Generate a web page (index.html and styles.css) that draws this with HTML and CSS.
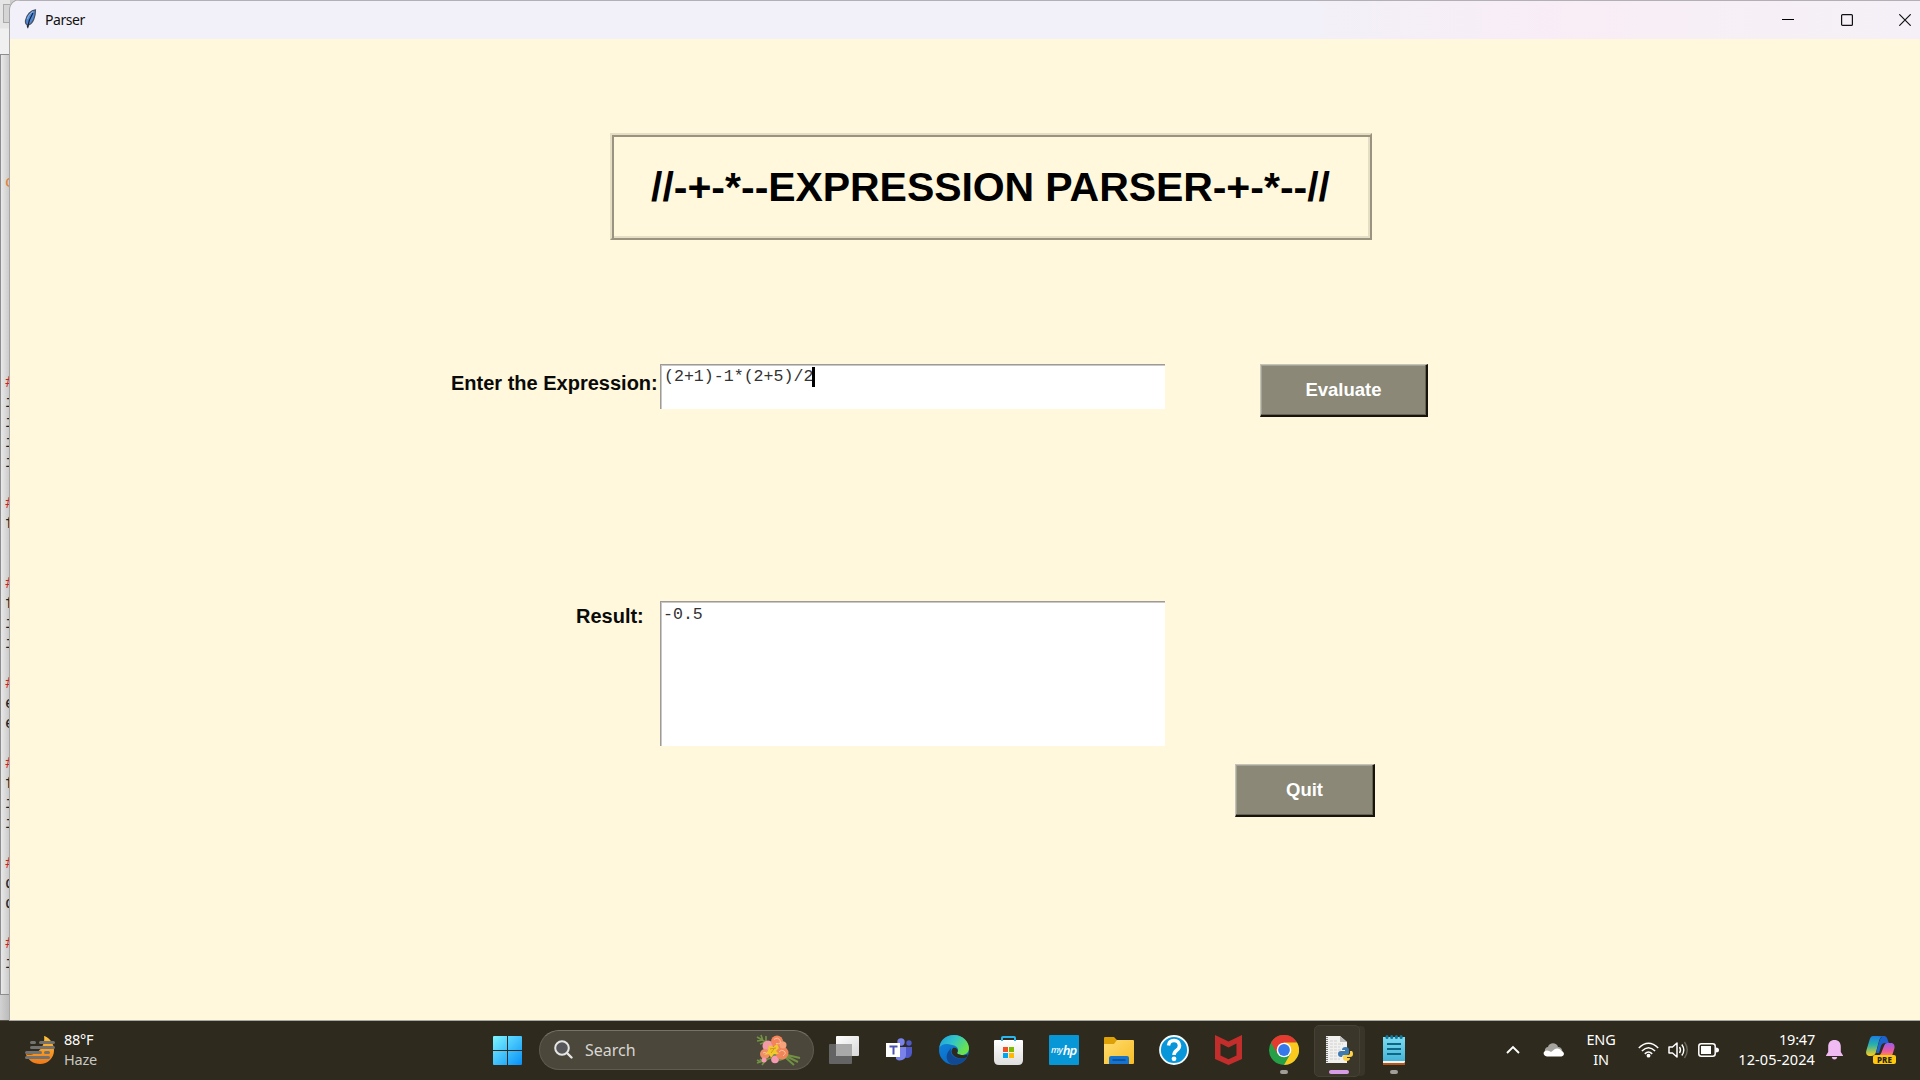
FILE: index.html
```html
<!DOCTYPE html>
<html lang="en">
<head>
<meta charset="utf-8">
<title>Parser</title>
<link rel="stylesheet" href="styles.css">
</head>
<body>
<div class="desktop">
  <div class="editor">
    <div class="editor-top"><span class="editor-tool"></span></div>
    <pre class="code"><span class="builtin">c</span>









<span class="comment">#</span>
i
i
i
i

<span class="comment">#</span>
f


<span class="comment">#</span>
f
i
i

<span class="comment">#</span>
e
e

<span class="comment">#</span>
f
i
i

<span class="comment">#</span>
d
d

<span class="comment">#</span>
i</pre>
    <div class="editor-status"></div>
  </div>
  <main class="window">
    <header class="titlebar">
      <svg class="feather" width="14" height="20" viewBox="0 0 14 20"><path d="M11.5.8C7 1 2.500 6 1.500 11.500c-.3 2 .4 3.500 1.700 4.200l.5 3.500.9-3.300C9 14.500 11.500 8 11.500.8z" fill="#4f8ad8" stroke="#4a5260" stroke-width="1.200"/><path d="M9 4C6.500 8 4.500 11 3.600 18" fill="none" stroke="#152039" stroke-width="1.100"/><path d="M9 2.500C6 4.500 4 7 3.500 10" fill="none" stroke="#8db6e8"/></svg>
      <span class="window-name">Parser</span>
      <div class="controls">
        <svg width="12" height="12" viewBox="0 0 12 12"><path d="M0 5.500h12" stroke="#000"/></svg>
        <svg width="12" height="12" viewBox="0 0 12 12"><rect x=".6" y=".6" width="10.800" height="10.800" rx="1" fill="none" stroke="#111" stroke-width="1.200"/></svg>
        <svg width="12" height="12" viewBox="0 0 12 12"><path d="M.3.3l11.400 11.400M11.700.3L.3 11.700" stroke="#111" stroke-width="1.200"/></svg>
      </div>
    </header>
    <section class="content">
      <h1 class="banner"><span>//-+-*--</span><span class="banner-name">EXPRESSION PARSER</span><span>-+-*--//</span></h1>
      <div class="row row-expression">
        <label class="label label-expression">Enter the Expression:</label>
        <div class="field field-expression"><span class="typed">(2+1)-1*(2+5)/2</span><i class="caret"></i></div>
        <button class="button button-evaluate">Evaluate</button>
      </div>
      <div class="row row-result">
        <label class="label label-result">Result:</label>
        <div class="field field-result">-0.5</div>
      </div>
      <button class="button button-quit">Quit</button>
    </section>
  </main>
</div>
<footer class="taskbar">
  <div class="weather">
    <svg width="30" height="28" viewBox="0 0 30 28"><defs><linearGradient id="sun" x2="0" y2="1"><stop stop-color="#ffc43a"/><stop offset="1" stop-color="#f07817"/></linearGradient></defs><path d="M19 0c4 1 10 6 10 14.500C29 22 23 28 15 28 8 28 3 24 .8 18 11 21 21 11 19 0z" fill="url(#sun)"/><path d="M6.500 6.500h3M15.500 6.500h13M6.500 11.500h22M1.500 16.500h14M20.500 16.500h3M1.500 21.500h22" stroke="#727270" stroke-width="3" stroke-linecap="round"/></svg>
    <div class="weather-text"><span>88°F</span><span class="haze">Haze</span></div>
  </div>
  <svg class="start" width="29" height="29" viewBox="0 0 29 29"><defs><linearGradient id="win" x2="1" y2="1"><stop stop-color="#7df5ff"/><stop offset="1" stop-color="#0790f8"/></linearGradient></defs><path d="M1 0h13v14H0V1a1 1 0 0 1 1-1zM15 0h13a1 1 0 0 1 1 1v13H15zM0 15h14v14H1a1 1 0 0 1-1-1zM15 15h14v13a1 1 0 0 1-1 1H15z" fill="url(#win)"/></svg>
  <div class="search">
    <svg width="19" height="19" viewBox="0 0 19 19"><circle cx="8" cy="8" r="6.800" fill="#57575a" stroke="#e6e6e6" stroke-width="2"/><path d="M13 13l4.500 4.500" stroke="#e6e6e6" stroke-width="2.400" stroke-linecap="round"/></svg>
    <span class="search-text">Search</span>
    <svg class="bouquet" width="46" height="32" viewBox="0 0 46 32">
      <g fill="none" stroke="#719143" stroke-width="1.700"><path d="M16 11L2 3M5 10l6-2M2 7l6-1M8 12l6-2M6 1l2 6M11 2l0 6"/><path d="M16 24L2 29M5 25l3 3M9 24l3 3M7 31l3-4M2 26l4 2"/><path d="M32 21l13 3M31 22l12 6M30 23l9 8" stroke-width="2"/></g>
      <path d="M26 4l5 6-1 6 5 7-10 4-9-1z" fill="#719143"/>
      <circle cx="13" cy="12" r="5.500" fill="#f29aa8"/><circle cx="22" cy="7.500" r="6" fill="#f4845c"/><circle cx="10" cy="20" r="5" fill="#ee8f68"/><circle cx="20" cy="25.500" r="3.800" fill="#f59ab0"/><circle cx="27" cy="19" r="6.500" fill="#f0855a"/><circle cx="28" cy="11" r="3.500" fill="#f8a27c"/><circle cx="9" cy="26" r="2.500" fill="#f59ab0"/>
      <path d="M14 11l4 2 4-3 2 4-3 3 3 3-5 0-3 4-2-4-5 1 4-4z" fill="#f1c92f"/>
      <path d="M19 5.500q4-3 6 1t-4 3M24 18q2-3 5-1t-1 5M8 19q2-2 4 1" fill="none" stroke="#ffc0a0"/><path d="M15 15l6-1M16 19l3-4" stroke="#c99a12"/>
    </svg>
  </div>
  <nav class="apps">
    <div class="app"><svg width="30" height="28" viewBox="0 0 30 28"><defs><linearGradient id="tv" x2="1" y2="1"><stop stop-color="#fff"/><stop offset="1" stop-color="#d8d8d8"/></linearGradient></defs><rect y="8" width="23" height="20" rx="1" fill="#646464"/><rect x="7" y="0" width="23" height="20" rx="1" fill="url(#tv)"/><path d="M7 8h16v12H8a1 1 0 0 1-1-1z" fill="#a9a9a9"/></svg></div>
    <div class="app"><svg class="teams" width="27" height="24" viewBox="0 0 27 24"><circle cx="15" cy="4" r="3.700" fill="#7b83eb"/><circle cx="23" cy="5" r="2.700" fill="#5059c9"/><path d="M18 9h8v6a5 5 0 0 1-8 4z" fill="#5059c9"/><path d="M10 9h10v8a6 6 0 0 1-10 4z" fill="#7b83eb"/><rect y="5" width="14" height="14" fill="#fff"/><path d="M3.500 8.500h8M7.500 8.500v8" stroke="#4c53b4" stroke-width="2"/></svg></div>
    <div class="app"><svg width="30" height="30" viewBox="0 0 30 30"><defs><linearGradient id="ea" x2="1" y2=".5"><stop stop-color="#1b9de2"/><stop offset=".5" stop-color="#32c5c8"/><stop offset="1" stop-color="#6ae34b"/></linearGradient><linearGradient id="eb" x2=".6" y2="1"><stop stop-color="#1489dc"/><stop offset="1" stop-color="#0867c4"/></linearGradient></defs><circle cx="15" cy="15" r="15" fill="url(#eb)"/><path d="M28 22c-3 5-8 8-13 8-7-1-9-8-6-13l3-4c-2 8 6 13 16 9z" fill="#114a93"/><path d="M.4 13C1 5 7 0 15 0c9 0 15 7 15 13 0 5-4 7-7 7-2 0-5-1-5-2 2-2 2-7-5-8C7 8 2 9 .4 13z" fill="url(#ea)"/><path d="M18 18c1 2 7 3 10.500 1.500L28.500 22c-5 2-11 2-14.500-2-2-2-2-5 0-7 4-1 6 3 4 5z" fill="#2e2a1d"/></svg></div>
    <div class="app"><svg width="29" height="30" viewBox="0 0 29 30"><defs><linearGradient id="st" x2="0" y2="1"><stop stop-color="#fff"/><stop offset="1" stop-color="#dedede"/></linearGradient></defs><path d="M0 6q0-1 1-1h27q1 0 1 1v19q0 5-5 5H5q-5 0-5-5z" fill="url(#st)"/><path d="M8 6V2.800Q8 2 9 2h11q1 0 1 .8V6" fill="none" stroke="#2cb6ef" stroke-width="2"/><path fill="#f25022" d="M9 12h5v5H9z"/><path fill="#7fba00" d="M15 12h5v5h-5z"/><path fill="#00a4ef" d="M9 18h5v5H9z"/><path fill="#ffb900" d="M15 18h5v5h-5z"/></svg></div>
    <div class="app"><div class="myhp"><span class="my">my</span><span class="hp">hp</span></div></div>
    <div class="app"><svg class="folder" width="30" height="27" viewBox="0 0 30 27"><defs><linearGradient id="fo" x2="1" y2="1"><stop stop-color="#ffdc70"/><stop offset="1" stop-color="#f8bd25"/></linearGradient></defs><path d="M0 10V1q0-1 1-1h9l3 3h8v7z" fill="#dda006"/><path d="M0 7h10l3-4h16q1 0 1 1v22q0 1-1 1H0z" fill="url(#fo)"/><path d="M5 27v-6q0-2 2-2h16q2 0 2 2v6z" fill="#1673ce"/><path d="M9 23h12" stroke="#0b4a91" stroke-width="1.300" stroke-linecap="round"/></svg></div>
    <div class="app"><svg width="30" height="30" viewBox="0 0 30 30"><circle cx="15" cy="15" r="14" fill="#0796d9" stroke="#f6fbff" stroke-width="1.800"/><path d="M9.500 10.500q.5-5 5.500-5t5.500 5q0 3-3 5-2.500 1.800-2.500 4.500" fill="none" stroke="#fff" stroke-width="3.500"/><circle cx="15" cy="23.800" r="2.400" fill="#fff"/></svg></div>
    <div class="app"><svg width="27" height="30" viewBox="0 0 27 30"><path d="M0 0l13.500 6.500L27 0v24l-13.500 6L0 24zM5.500 8.500v12l8 3.700 8-3.700v-12l-8 4z" fill="#c32e2c" fill-rule="evenodd"/></svg></div>
    <div class="app running"><svg width="30" height="30" viewBox="0 0 30 30"><circle cx="15" cy="15" r="15" fill="#25a046"/><path d="M2 7.500A15 15 0 0 1 28 7.500L15 8.500 8.500 18.700z" fill="#e43b30"/><path d="M28 7.500A15 15 0 0 1 15 30l6.500-11.300L15 7.500z" fill="#fbc91e"/><circle cx="15" cy="15" r="7.300" fill="#fff"/><circle cx="15" cy="15" r="5.900" fill="#3478ea"/></svg></div>
    <div class="app active"><svg class="python" width="28" height="28" viewBox="0 0 28 28"><path d="M1 0h14l7 6v21H1z" fill="#f1f1f0"/><path d="M15 0v6h7z" fill="#bdbdbd"/><path d="M2 1v26" stroke="#555" stroke-width="1.500" stroke-dasharray="1 1"/><path d="M5 5h8M5 8h13M5 11h10M5 14h12M5 17h9M5 20h8M5 23h10" stroke="#cfcfcf" stroke-dasharray="3 1"/><path d="M17 14q0-3 3.500-3t3.500 3v3q0 2-3 2h-2q-2 0-2 2h-1q-3 0-3-3t3-3h4v-1z" fill="#3f7bb1"/><path d="M27 15q1 1 1 3 0 3-3 3h-3v1h3q0 3-3.500 3T18 22v-1.500q0-1.500 2-1.500h3q2 0 2-2v-2z" fill="#ffd345"/></svg></div>
    <div class="app running"><svg width="22" height="30" viewBox="0 0 22 30"><defs><linearGradient id="np" x2="0" y2="1"><stop stop-color="#7cdcf2"/><stop offset="1" stop-color="#45b4d8"/></linearGradient></defs><path fill="#b8571c" d="M0 24h22v6H0z"/><path fill="#f2f2ee" d="M0 22h22v5l-1 1H0z"/><path fill="url(#np)" d="M0 2h22v24H0z"/><path d="M4 9h14M4 14h14M4 19h14" stroke="#0d6785" stroke-width="1.800"/><path d="M4 1.500v1M8.700 1.500v1M13.400 1.500v1M18.100 1.500v1" stroke="#12789c" stroke-width="3" stroke-linecap="round"/></svg></div>
  </nav>
  <div class="tray">
    <svg class="chevron" width="14" height="9" viewBox="0 0 14 9"><path d="M1 8l6-6 6 6" fill="none" stroke="#fff" stroke-width="1.900"/></svg>
    <svg class="cloud" width="21" height="14" viewBox="0 0 21 14"><path d="M2 11C1 6 3 4 5 4c1-5 9-5 10 0 4 0 5 4 4 7z" fill="#a4a39e"/><path d="M4 13.500c-5-1-4-6 0-6 1.500 0 3 1 4 1.500 3-2 4-4 7-3.500 2 .3 3 1.500 3.500 2.500 3.500 1 3 5 0 5.500z" fill="#fff"/></svg>
    <div class="lang"><span>ENG</span><span>IN</span></div>
    <svg class="wifi" width="21" height="16" viewBox="0 0 21 16"><g fill="none" stroke="#fff" stroke-width="1.500"><path d="M.8 6q9.700-9.500 19.400 0"/><path d="M3.900 9q6.600-6.500 13.200 0"/><path d="M6.800 11.900q3.700-3.700 7.400 0"/></g><circle cx="10.500" cy="13.700" r="1.900" fill="#fff"/></svg>
    <svg class="speaker" width="21" height="18" viewBox="0 0 21 18"><path d="M1 6h3.500L9 2v14l-4.500-4H1z" fill="none" stroke="#fff" stroke-width="1.500" stroke-linejoin="round"/><path d="M11.500 6q2 3 0 6M13.800 3.500q4 5.500 0 11" fill="none" stroke="#fff" stroke-width="1.400"/><path d="M16.500 1q5.500 8 0 16" fill="none" stroke="#69665c" stroke-width="1.400"/></svg>
    <svg class="battery" width="21" height="14" viewBox="0 0 21 14"><rect x=".8" y=".8" width="16.400" height="12.400" rx="2.500" fill="none" stroke="#fff" stroke-width="1.500"/><rect x="3" y="3" width="10" height="8" fill="#fff"/><path d="M18 4.500q3 0 3 2.500t-3 2.500z" fill="#fff"/></svg>
    <div class="clock"><span class="time">19:47</span><span class="date">12-05-2024</span></div>
    <svg class="bell" width="17" height="20" viewBox="0 0 17 20"><path d="M8.500 0c4 0 6.300 2.700 6.300 6.500V12l2.200 3.500V16H0v-.5L2.200 12V6.500C2.200 2.700 4.500 0 8.500 0zM5.700 17h5.600q-.6 2.500-2.800 2.500T5.700 17z" fill="#f0bbf2"/></svg>
    <div class="copilot">
      <svg width="30" height="28" viewBox="0 0 30 28"><defs><linearGradient id="ca" x2="0" y2="1"><stop stop-color="#1a7fe2"/><stop offset=".45" stop-color="#2ab2a9"/><stop offset="1" stop-color="#ffcf1c"/></linearGradient><linearGradient id="cb" x2="0" y2="1"><stop stop-color="#9a5cf0"/><stop offset=".6" stop-color="#ea5a9f"/><stop offset="1" stop-color="#ff8a5a"/></linearGradient></defs><path d="M7 0h10q-3 1-4 5l-3 11q-1 4-5 4H3q-4-1-2.500-6l3-10Q4.500 0 7 0z" fill="url(#ca)"/><path d="M12 0h6q3 0 4 5l1 2h-4q-3 0-4 3l-2 7h-3l3-11q1-4 3-5z" fill="#1d63d0"/><path d="M21 7h5q3 1 2.500 5L26 20H12q3-1 4-5l2-5q1-3 3-3z" fill="url(#cb)"/></svg>
      <span class="pre">PRE</span>
    </div>
  </div>
</footer>
</body>
</html>
```
FILE: styles.css
```css
* { box-sizing: border-box; }
body { margin: 0; width: 1920px; height: 1080px; overflow: hidden; font-family: "Noto Sans", "Open Sans", sans-serif; background: #2e2a1d; }
.desktop { height: 1020px; display: flex; background: linear-gradient(90deg, #e2e2e2 0, #cacaca 10px, #e2e2e6 20px); }

/* Sliver of the editor behind the window */
.editor { width: 10px; height: 1020px; overflow: hidden; display: flex; flex-direction: column; background: linear-gradient(90deg, #e2e2e2, #bbb); }
.editor-top { height: 54px; flex: none; background: linear-gradient(#e5e5e5 0 28px, #f0f0f0 29px); padding: 4px 0 0 3px; }
.editor-tool { display: block; width: 12px; height: 19px; border: 1px solid #aaa; background: #d5d5d5; }
.code { margin: 0; height: 941px; flex: none; padding: 118px 0 0 4px; border: solid #8d8d8d; border-width: 1px 0 1px 1px; font: 16.6px/20.03px "Liberation Mono", monospace; color: #222; background: linear-gradient(90deg, #e9e9e9, #c8c8c8); }
.comment { color: #d5201c; }
.builtin { color: #e5812f; }
.editor-status { flex: 1; background: linear-gradient(90deg, #d2d2d2, #b9b9b9); }

.window { width: 1910px; height: 1020px; border-radius: 10px 0 0 0; overflow: hidden; background: #fff8dc; box-shadow: 0 0 0 1px #a9a7a8; }
.titlebar { height: 39px; display: flex; align-items: center; padding-left: 14px; border-top: 1px solid #b3b0b5; background: linear-gradient(90deg, #f2f0f8 0, #f2f0f8 68%, #f9edf6 82%, #f6f0f6 92%, #f5f0f7 100%); }
.feather { margin-top: -3px; }
.window-name { margin: -2px 0 0 7px; font-size: 14px; letter-spacing: -.45px; color: #111; }
.controls { margin-left: auto; display: flex; gap: 46.5px; padding-right: 9px; }

.content { height: 981px; display: flex; flex-direction: column; align-items: flex-start; padding-top: 94px; font-family: "Liberation Sans", Arial, sans-serif; }
.banner { margin: 0 0 0 600px; width: 762px; height: 107px; display: flex; align-items: center; justify-content: center; padding-right: 1px; padding-top: 1px; font-size: 41px; line-height: 47px; color: #000; white-space: nowrap; border: 2px solid; border-color: #e5dec4 #99937f #99937f #e5dec4; box-shadow: inset 2px 2px #99937f, inset -2px -2px #e5dec4; }
.banner-name { letter-spacing: -.08px; }
.row { display: flex; align-items: flex-start; }
.row-expression { margin-top: 124px; padding-left: 441px; }
.label { font-weight: bold; font-size: 20px; line-height: 24px; color: #0a0a0a; white-space: nowrap; }
.label-expression { width: 209px; padding-top: 7px; }
.field { width: 505px; background: #fff; border: solid #9c9b98; border-width: 1px 0 0 1px; box-shadow: inset 1px 1px #c9c8c4; font: 16.6px/19px "Liberation Mono", monospace; color: #333; white-space: pre; display: flex; }
.field-expression { height: 45px; padding: 2px 0 0 3px; }
.caret { width: 3px; height: 20px; background: #000; margin-left: -1px; }
.button { height: 53px; padding: 0; margin: 0; border: solid; border-width: 1px 2px 2px 1px; border-color: #c5c3b8 #15140f #15140f #c5c3b8; box-shadow: inset -1px -1px #65634f, inset 1px 1px #a5a393; background: #8b8878; color: #fff; font: bold 18.5px/22px "Liberation Sans", Arial, sans-serif; }
.button-evaluate { width: 168px; margin-left: 95px; }
.row-result { margin-top: 184px; padding-left: 566px; }
.label-result { width: 84px; padding-top: 3px; }
.field-result { height: 145px; padding: 3px 0 0 2px; }
.button-quit { width: 140px; margin: 18px 0 0 1225px; }

.taskbar { height: 60px; display: flex; align-items: center; padding-bottom: 2px; border-top: 1px solid #56534a; background: #2e2a1d; color: #fff; }
.weather { width: 493px; padding-left: 25px; display: flex; align-items: center; gap: 9px; }
.weather-text { margin-top: -2px; display: flex; flex-direction: column; font-size: 14.5px; line-height: 20px; letter-spacing: -.3px; }
.haze { color: #c9c7c1; letter-spacing: -.2px; }
.start { flex: none; margin-top: 1px; }
.search { flex: none; width: 275px; height: 40px; margin-left: 17px; border-radius: 20px; border: 1px solid #5f5b51; border-top-color: #77736a; background: #4b473b; display: flex; align-items: center; padding-left: 14px; }
.search-text { margin-left: 12px; font-size: 16px; color: #d8d6d1; letter-spacing: 0; }
.bouquet { margin-left: auto; margin-right: 12px; }
.apps { flex: none; display: flex; margin-left: 2px; height: 50px; }
.app { width: 55px; height: 50px; display: flex; align-items: center; justify-content: center; position: relative; }
.running::after, .active::after { content: ""; position: absolute; bottom: 1px; left: 24px; width: 8px; height: 4px; border-radius: 2px; background: #a09e98; }
.active::before { content: ""; position: absolute; left: 3px; top: 0; width: 44px; height: 50px; border-radius: 5px; border: 1px solid #454135; background: #3a362a; box-shadow: 6px 0 0 -1px #393529; }
.active::after { left: 18px; width: 20px; background: #d89ee5; }
.teams { margin-left: 2px; }
.python { position: relative; }
.folder { margin-top: 1px; }
.myhp { width: 30px; height: 30px; background: #0796d6; display: flex; align-items: center; justify-content: center; font-style: italic; line-height: 18px; border-radius: 1px; }
.my { font-size: 9px; letter-spacing: -.3px; font-weight: 500; }
.hp { font-size: 13px; letter-spacing: -1px; font-weight: 600; }
.tray { flex: none; display: flex; align-items: center; margin-left: 85px; }
.cloud { margin-left: 23px; }
.lang { width: 40px; margin: -2px 0 0 17px; display: flex; flex-direction: column; align-items: center; font-size: 14.5px; line-height: 20px; letter-spacing: -.2px; }
.wifi { margin-left: 17px; }
.speaker { margin-left: 9px; }
.battery { margin-left: 9px; }
.clock { width: 96px; margin-top: -2px; display: flex; flex-direction: column; align-items: flex-end; font-size: 14.5px; line-height: 20px; }
.date { letter-spacing: .1px; }
.time { letter-spacing: -.2px; }
.bell { margin-left: 11px; }
.copilot { margin-left: 23px; position: relative; width: 30px; height: 28px; }
.pre { position: absolute; left: 7px; top: 19px; width: 23px; height: 9px; border-radius: 2px; background: #ffc70d; color: #222; font-size: 8px; line-height: 9px; font-weight: 800; text-align: center; }
```
